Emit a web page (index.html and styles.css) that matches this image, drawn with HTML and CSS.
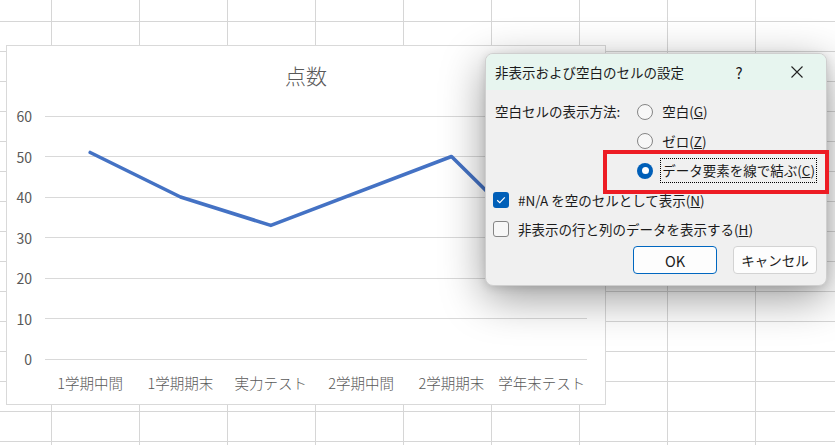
FILE: index.html
```html
<!DOCTYPE html>
<html lang="ja">
<head>
<meta charset="utf-8">
<title>非表示および空白のセルの設定</title>
<link rel="stylesheet" href="styles.css">
</head>
<body>
<div class="sheet">
  <div class="chart">
    <div class="chart-title">点数</div>
    <svg class="plot" width="598" height="299" viewBox="0 0 598 299">
      <g class="grid">
        <line x1="38" x2="580" y1="11" y2="11"/>
        <line x1="38" x2="580" y1="51.5" y2="51.5"/>
        <line x1="38" x2="580" y1="92" y2="92"/>
        <line x1="38" x2="580" y1="132.5" y2="132.5"/>
        <line x1="38" x2="580" y1="173" y2="173"/>
        <line x1="38" x2="580" y1="213.5" y2="213.5"/>
        <line x1="38" x2="580" y1="254" y2="254"/>
      </g>
      <g class="ylab">
        <text x="25" y="11">60</text>
        <text x="25" y="51.5">50</text>
        <text x="25" y="92">40</text>
        <text x="25" y="132.5">30</text>
        <text x="25" y="173">20</text>
        <text x="25" y="213.5">10</text>
        <text x="25" y="254">0</text>
      </g>
      <g class="xlab">
        <text x="83.2" y="277">1学期中間</text>
        <text x="173.5" y="277">1学期期末</text>
        <text x="263.8" y="277">実力テスト</text>
        <text x="354.2" y="277">2学期中間</text>
        <text x="444.5" y="277">2学期期末</text>
        <text x="534.8" y="277">学年末テスト</text>
      </g>
      <polyline class="series" points="83.2,47.5 173.5,92 263.8,120.4 444.5,51.5 534.8,140.6"/>
    </svg>
  </div>

  <div class="dialog">
    <div class="dlg-titlebar">
      <div class="dlg-title">非表示および空白のセルの設定</div>
      <div class="tb-btn help">?</div>
      <div class="tb-btn close">
        <svg width="12" height="12" viewBox="0 0 12 12"><path d="M0.5 0.5 L11.5 11.5 M11.5 0.5 L0.5 11.5" stroke="#222" stroke-width="1.1" fill="none"/></svg>
      </div>
    </div>
    <div class="dlg-body">
      <div class="show-group">
        <div class="group-label">空白セルの表示方法:</div>
        <div class="radio-list">
          <div class="radio-row"><span class="radio"></span><span class="opt-text">空白(<u>G</u>)</span></div>
          <div class="radio-row"><span class="radio"></span><span class="opt-text">ゼロ(<u>Z</u>)</span></div>
          <div class="radio-row"><span class="radio on"></span><span class="opt-text focus">データ要素を線で結ぶ(<u>C</u>)</span></div>
        </div>
      </div>
      <div class="check-row">
        <span class="check on"><svg width="10" height="8" viewBox="0 0 10 8"><path d="M1.2 4.2 L3.8 6.6 L8.8 1.4" stroke="#fff" stroke-width="1.2" fill="none"/></svg></span>
        <span class="opt-text">#N/A を空のセルとして表示(<u>N</u>)</span>
      </div>
      <div class="check-row">
        <span class="check"></span>
        <span class="opt-text">非表示の行と列のデータを表示する(<u>H</u>)</span>
      </div>
      <div class="btn-row">
        <div class="btn primary">OK</div>
        <div class="btn">キャンセル</div>
      </div>
    </div>
  </div>

  <div class="highlight"></div>
</div>
</body>
</html>
```

FILE: styles.css
```css
html, body {
  margin: 0;
  padding: 0;
  height: 100%;
}

body {
  font-family: "Noto Sans CJK JP", "Noto Sans", sans-serif;
  background: #ffffff;
}

.sheet {
  position: relative;
  width: 835px;
  height: 445px;
  overflow: hidden;
  background-color: #ffffff;
  background-image:
    linear-gradient(to right, #d6d6d6 1px, transparent 1px),
    linear-gradient(to bottom, #d6d6d6 1px, transparent 1px);
  background-size: 88px 30px;
  background-position: 51px 21px;
}

/* ---------- chart ---------- */
.chart {
  position: absolute;
  left: 6px;
  top: 45px;
  width: 600px;
  height: 360px;
  box-sizing: border-box;
  border: 1px solid #d9d9d9;
  background: #ffffff;
  display: flex;
  flex-direction: column;
}

.chart-title {
  height: 59px;
  box-sizing: border-box;
  padding-top: 16px;
  line-height: 26px;
  font-size: 21px;
  font-weight: 300;
  color: #595959;
  text-align: center;
}

.plot {
  display: block;
}

.grid line {
  stroke: #d9d9d9;
  stroke-width: 1;
  shape-rendering: crispEdges;
}

.ylab text {
  font-size: 14px;
  fill: #595959;
  text-anchor: end;
  dominant-baseline: central;
}

.xlab text {
  font-size: 14.5px;
  font-weight: 300;
  fill: #595959;
  text-anchor: middle;
  dominant-baseline: central;
}

.series {
  fill: none;
  stroke: #4472c4;
  stroke-width: 3.6;
  stroke-linejoin: round;
  stroke-linecap: round;
}

/* ---------- dialog ---------- */
.dialog {
  position: absolute;
  left: 485px;
  top: 53px;
  width: 342px;
  box-sizing: border-box;
  border: 1px solid #cfcfcf;
  border-radius: 8px;
  background: #f0f0f0;
  overflow: hidden;
  color: #1b1b1b;
  box-shadow: 0 12px 44px rgba(0, 0, 0, 0.4), 0 2px 8px rgba(0, 0, 0, 0.12);
}

.dlg-titlebar {
  height: 36px;
  display: flex;
  align-items: center;
  background: #e7f5ef;
  padding-left: 9px;
}

.dlg-title {
  flex: 1;
  font-size: 13.5px;
  line-height: 20px;
}

.tb-btn {
  width: 58px;
  height: 36px;
  display: flex;
  align-items: center;
  justify-content: center;
  font-size: 15px;
}

.dlg-body {
  padding: 7px 9px 11px 7px;
  font-size: 13.5px;
}

.show-group {
  display: flex;
}

.group-label {
  width: 145px;
  box-sizing: border-box;
  padding-left: 2px;
  height: 29.5px;
  line-height: 29.5px;
}

.radio-list {
  display: flex;
  flex-direction: column;
}

.radio-row {
  height: 29.5px;
  display: flex;
  align-items: center;
  gap: 7px;
}

.radio {
  width: 16px;
  height: 16px;
  box-sizing: border-box;
  border-radius: 50%;
  border: 1px solid #858585;
  background: #f7f7f7;
  flex: none;
}

.radio.on {
  border: none;
  background: #005fb8;
  display: flex;
  align-items: center;
  justify-content: center;
}

.radio.on::after {
  content: "";
  width: 7px;
  height: 7px;
  border-radius: 50%;
  background: #ffffff;
}

.opt-text {
  padding: 0 1px;
  border: 1px solid transparent;
  line-height: 23px;
  white-space: nowrap;
}

.opt-text.focus {
  border: 1px dotted #000000;
}

.check-row {
  height: 29px;
  display: flex;
  align-items: center;
  gap: 7px;
}

.check {
  width: 16px;
  height: 16px;
  box-sizing: border-box;
  border-radius: 3px;
  border: 1px solid #858585;
  background: #f7f7f7;
  flex: none;
  display: flex;
  align-items: center;
  justify-content: center;
}

.check.on {
  border: none;
  background: #005fb8;
}

.btn-row {
  margin-top: 2.5px;
  display: flex;
  justify-content: flex-end;
  gap: 16px;
}

.btn {
  width: 84px;
  height: 28px;
  box-sizing: border-box;
  border: 1px solid #d3d3d3;
  border-radius: 4px;
  background: #fdfdfd;
  display: flex;
  align-items: center;
  justify-content: center;
  font-size: 13.5px;
}

.btn.primary {
  border: 1px solid #0067c0;
  font-size: 14.5px;
}

/* ---------- annotation ---------- */
.highlight {
  position: absolute;
  left: 603px;
  top: 150px;
  width: 226px;
  height: 44px;
  box-sizing: border-box;
  border: 4px solid #ed1c24;
}
```
